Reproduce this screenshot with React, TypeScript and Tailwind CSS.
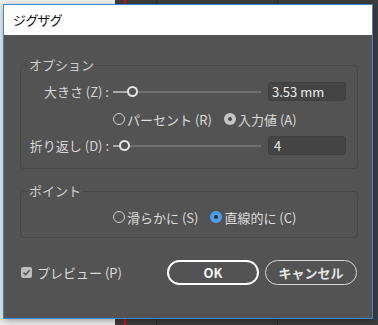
import React from "react";

const font = "[font-family:'Noto_Sans_CJK_JP','Noto_Sans',sans-serif]";

function Slider({ pos }: { pos: number }) {
  return (
    <div className="relative h-[19px] w-[148px]">
      <div className="absolute left-0 top-[9px] h-[2px] w-full bg-[#707070]" />
      <div className="absolute left-0 top-[9px] h-[2px] bg-[#a8a8a8]" style={{ width: pos }} />
      <div
        className="absolute top-[4px] h-[11px] w-[11px] rounded-full border-2 border-[#e6e6e6] bg-[#535353]"
        style={{ left: pos - 5 }}
      />
    </div>
  );
}

function Radio({ label, state }: { label: string; state: "off" | "gray" | "blue" }) {
  return (
    <div className="flex items-center gap-[2px]">
      {state === "off" && <span className="h-[12px] w-[12px] rounded-full border border-[#cfcfcf]" />}
      {state === "gray" && (
        <span className="flex h-[12px] w-[12px] items-center justify-center rounded-full bg-[#c4c4c4]">
          <span className="h-[4px] w-[4px] rounded-full bg-[#4a4a4a]" />
        </span>
      )}
      {state === "blue" && (
        <span className="flex h-[12px] w-[12px] items-center justify-center rounded-full bg-[#4a9ff0]">
          <span className="h-[4px] w-[4px] rounded-full bg-[#2a3340]" />
        </span>
      )}
      <span className="text-[13px] leading-none text-[#dcdcdc]">{label}</span>
    </div>
  );
}

function Group({ title, children }: { title: string; children: React.ReactNode }) {
  return (
    <div className="relative ml-[16px] w-[338px] rounded-[4px] border border-[#484848]">
      <span className="absolute -top-[9px] left-[7px] bg-[#535353] px-[1px] text-[13px] leading-[16px] text-[#cfcfcf]">
        {title}
      </span>
      {children}
    </div>
  );
}

export default function App() {
  return (
    <div className={`relative h-[325px] w-[378px] overflow-hidden ${font}`}>
      <div className="flex h-full">
        <div className="w-[115px] bg-[#f2f2f2]" />
        <div className="flex flex-1 bg-[#3d3d3d]">
          <div className="ml-[9px] w-[2px] bg-[#e01010]" />
          <div className="ml-[30px] w-[1px] bg-[#2e2e2e]" />
          <div className="ml-[120px] w-[1px] bg-[#2e2e2e]" />
        </div>
      </div>

      <div className="absolute left-[3px] top-[4px] flex h-[315px] w-[370px] flex-col border border-[#3a8ad6] bg-[#535353] shadow-[0_2px_8px_rgba(0,0,0,0.35)]">
        <div className="flex h-[30px] items-center bg-white pl-[9px] text-[13px] text-[#111] [font-feature-settings:'palt']">
          ジグザグ
        </div>

        <div className="mt-[30px]">
          <Group title="オプション">
            <div className="flex flex-col pb-[13px] pt-[16px]">
              <div className="flex h-[19px] items-center">
                <span className="w-[88px] text-right text-[13px] leading-none text-[#d6d6d6]">大きさ (Z) :</span>
                <span className="ml-[4px]">
                  <Slider pos={19} />
                </span>
                <div className="ml-[7px] flex h-[19px] w-[78px] items-center rounded-[3px] border border-[#3f3f3f] bg-[#444] pl-[3px] text-[13px] text-[#ececec]">
                  3.53 mm
                </div>
              </div>
              <div className="mt-[9px] flex h-[18px] items-center gap-[12px] pl-[92px]">
                <Radio label="パーセント (R)" state="off" />
                <Radio label="入力値 (A)" state="gray" />
              </div>
              <div className="mt-[8px] flex h-[19px] items-center">
                <span className="w-[88px] text-right text-[13px] leading-none text-[#d6d6d6]">折り返し (D) :</span>
                <span className="ml-[4px]">
                  <Slider pos={11} />
                </span>
                <div className="ml-[7px] flex h-[19px] w-[78px] items-center rounded-[3px] border border-[#3f3f3f] bg-[#444] pl-[5px] text-[13px] text-[#ececec]">
                  4
                </div>
              </div>
            </div>
          </Group>
        </div>

        <div className="mt-[22px]">
          <Group title="ポイント">
            <div className="flex h-[45px] items-center gap-[12px] pl-[92px] pt-[5px]">
              <Radio label="滑らかに (S)" state="off" />
              <Radio label="直線的に (C)" state="blue" />
            </div>
          </Group>
        </div>

        <div className="mt-[22px] flex items-center pl-[17px] pr-[15px]">
          <div className="flex items-center gap-[5px]">
            <span className="flex h-[11px] w-[11px] items-center justify-center rounded-[2px] bg-[#bdbdbd]">
              <svg width="9" height="9" viewBox="0 0 9 9">
                <path d="M1.5 4.6 L3.6 6.7 L7.6 2.2" fill="none" stroke="#555" strokeWidth="1.6" />
              </svg>
            </span>
            <span className="text-[13px] text-[#dcdcdc]">プレビュー (P)</span>
          </div>
          <div className="ml-auto flex gap-[6px]">
            <button className="flex h-[25px] w-[92px] items-center justify-center rounded-full border-2 border-white text-[13px] font-bold text-[#f2f2f2]">
              OK
            </button>
            <button className="flex h-[25px] w-[92px] items-center justify-center rounded-full border-[1.5px] border-[#d6d6d6] text-[13px] font-bold text-[#e6e6e6]">
              キャンセル
            </button>
          </div>
        </div>
      </div>
    </div>
  );
}
